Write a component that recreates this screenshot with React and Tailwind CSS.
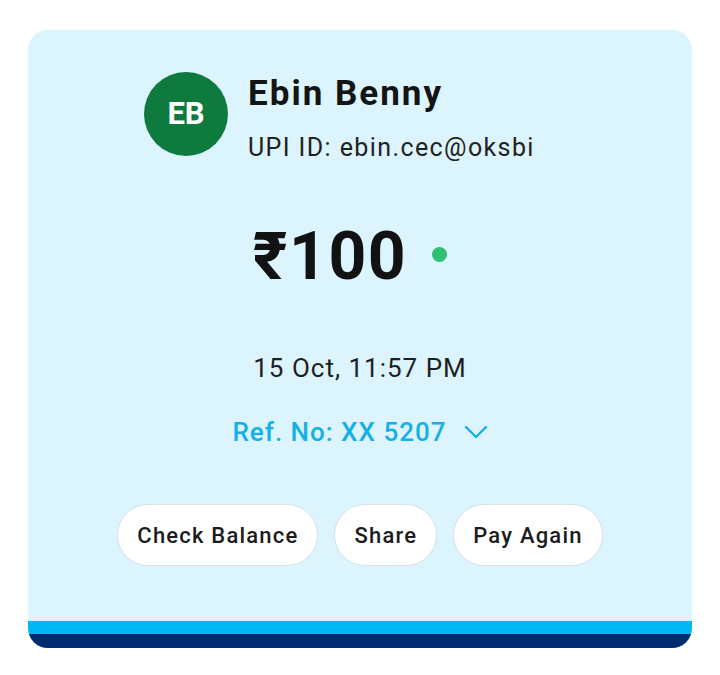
import React from 'react';

const App = () => {
  return (
    <div className="min-h-screen bg-white pt-[30px] px-[28px]" style={{ fontFamily: 'Roboto, "Noto Sans", sans-serif' }}>
      <div className="bg-[#dcf4fd] rounded-[20px] overflow-hidden flex flex-col">
        {/* payee */}
        <div className="flex items-start pl-[116px] pt-[42px]">
          <div className="w-[84px] h-[84px] rounded-full bg-[#0e7a3e] flex items-center justify-center text-white text-[31px] font-bold">
            EB
          </div>
          <div className="ml-[20px] mt-[2px] flex flex-col gap-[19px]">
            <div className="text-[35px] leading-[40px] font-bold tracking-[2px] text-[#141414]">Ebin Benny</div>
            <div className="text-[25px] leading-[30px] tracking-[1.4px] text-[#222]">UPI ID: ebin.cec@oksbi</div>
          </div>
        </div>

        {/* amount */}
        <div className="flex items-center justify-center pr-[20px] mt-[61px]">
          <span className="text-[66px] leading-[66px] font-bold tracking-[1.5px] text-[#121212]">₹100</span>
          <span className="ml-[25px] mb-[6px] w-[15px] h-[15px] rounded-full bg-[#2fbf74]"></span>
        </div>

        <div className="mt-[63px] text-center text-[26px] leading-[30px] tracking-[1px] text-[#1f1f1f]">
          15 Oct, 11:57 PM
        </div>

        <div className="mt-[34px] flex items-center justify-center gap-[17px] text-[26px] leading-[30px] tracking-[1px] font-medium text-[#14b0e6]">
          <span>Ref. No: XX 5207</span>
          <svg width="24" height="24" viewBox="0 0 24 24" fill="none" stroke="#14b0e6" strokeWidth="2.4" strokeLinecap="round" strokeLinejoin="round">
            <path d="M2 7l10 10 10-10" />
          </svg>
        </div>

        <div className="mt-[57px] flex justify-center gap-[16px]">
          <button className="h-[62px] px-[19px] rounded-full bg-white border border-[#d6e2e8] text-[22px] font-medium tracking-[1.2px] text-[#1c1c1c]">Check Balance</button>
          <button className="h-[62px] px-[19px] rounded-full bg-white border border-[#d6e2e8] text-[22px] font-medium tracking-[1.2px] text-[#1c1c1c]">Share</button>
          <button className="h-[62px] px-[19px] rounded-full bg-white border border-[#d6e2e8] text-[22px] font-medium tracking-[1.2px] text-[#1c1c1c]">Pay Again</button>
        </div>

        <div className="mt-[55px] h-[13px] bg-[#00b8f1]"></div>
        <div className="h-[14px] bg-[#002a72]"></div>
      </div>
    </div>
  );
};

export default App;
